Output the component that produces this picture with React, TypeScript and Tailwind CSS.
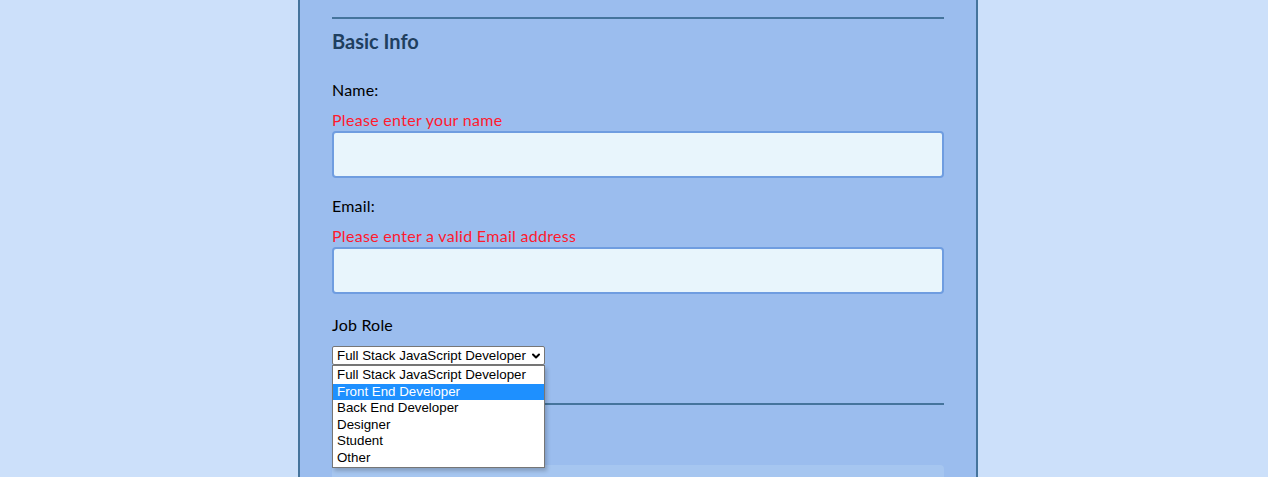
import { ChevronDown } from "lucide-react";

const ROLES = [
  "Full Stack JavaScript Developer",
  "Front End Developer",
  "Back End Developer",
  "Designer",
  "Student",
  "Other",
];

function Field({ label, error }: { label: string; error: string }) {
  return (
    <div className="flex flex-col">
      <label className="text-[16px] leading-[24px] tracking-[0.2px] text-black">{label}</label>
      <p className="mt-[6px] text-[16px] leading-[24px] tracking-[0.3px] text-[#ff1a2e]">{error}</p>
      <input
        type="text"
        className="-mt-[1px] h-[47px] w-full rounded-[4px] border-2 border-[#6f9de0] bg-[#e8f5fc] outline-none"
      />
    </div>
  );
}

export default function App() {
  return (
    <div
      className="flex h-[477px] justify-center overflow-hidden bg-[#cce0fa] pl-[8px]"
      style={{ fontFamily: "Lato, 'Open Sans', sans-serif" }}
    >
      <div className="w-[680px] shrink-0 border-x-2 border-[#45749c] bg-[#9bbdee] px-[32px] pt-[17px]">
        <section>
          <div className="h-[2px] bg-[#45749c]" />
          <h2 className="mt-[8px] text-[20px] font-bold leading-[28px] text-[#1f3f5f]">Basic Info</h2>

          <div className="mt-[23px] flex flex-col gap-[16px]">
            <Field label="Name:" error="Please enter your name" />
            <Field label="Email:" error="Please enter a valid Email address" />

            <div className="mt-[3px] flex flex-col">
              <label className="text-[16px] leading-[24px] tracking-[0.2px] text-black">Job Role</label>
              <div className="relative z-10 mt-[9px] w-[213px]">
                <div
                  className="flex h-[19px] items-center justify-between rounded-[2px] border border-[#767676] bg-white pl-[4px] pr-[2px] text-[13.33px] text-black"
                  style={{ fontFamily: "'Liberation Sans', Arial, sans-serif" }}
                >
                  <span>Full Stack JavaScript Developer</span>
                  <ChevronDown size={12} strokeWidth={4} className="text-black" />
                </div>
                <ul
                  className="absolute left-0 top-full w-[213px] border border-[#767676] bg-white py-[1px] shadow-[2px_3px_4px_rgba(0,0,0,0.2)]"
                  style={{ fontFamily: "'Liberation Sans', Arial, sans-serif" }}
                >
                  {ROLES.map((r, i) => (
                    <li
                      key={r}
                      className={
                        i === 1
                          ? "h-[16.5px] bg-[#1e90ff] pl-[4px] text-[13.33px] leading-[16.5px] text-white"
                          : "h-[16.5px] pl-[4px] text-[13.33px] leading-[16.5px] text-black"
                      }
                    >
                      {r}
                    </li>
                  ))}
                </ul>
              </div>
            </div>
          </div>
        </section>

        <section className="mt-[38px]">
          <div className="h-[2px] bg-[#45749c]" />
          <h2 className="mt-[8px] text-[20px] font-bold leading-[28px] text-[#1f3f5f]">T-Shirt Info</h2>
          <div className="mt-[24px] rounded-[4px] bg-[#a6c6f0] px-[8px] pt-[7px]">
            <p className="text-[16px] leading-[24px] text-black">Choose Design</p>
          </div>
        </section>
      </div>
    </div>
  );
}
